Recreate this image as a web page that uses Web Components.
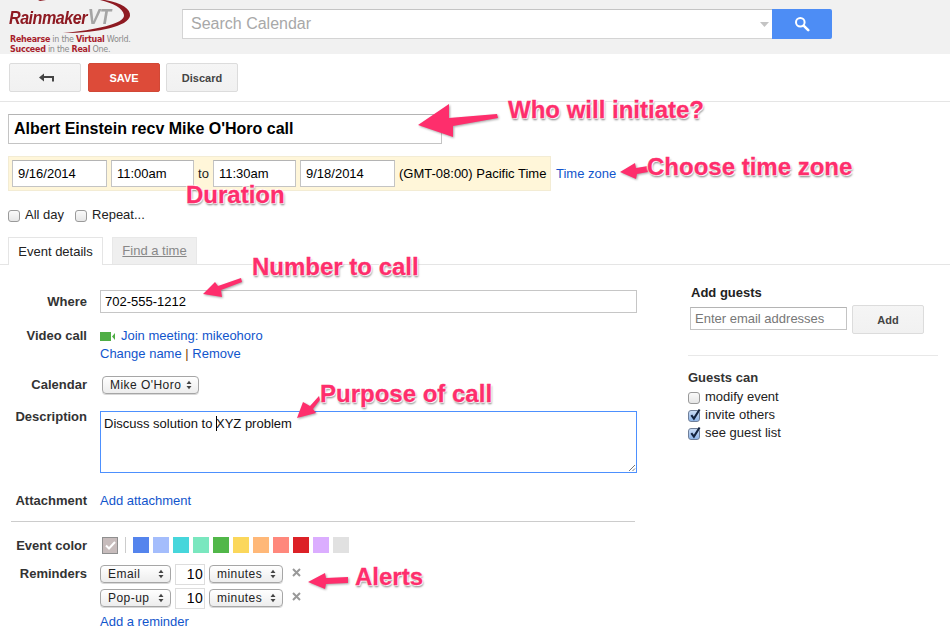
<!DOCTYPE html>
<html lang="en"><head><meta charset="utf-8"><title>Calendar event</title>
<style>
html,body{margin:0;padding:0;background:#fff}
body{width:950px;height:638px;overflow:hidden;position:relative;font:13px/16px "Liberation Sans",Arial,sans-serif;color:#000}
</style></head><body>
<rk-header></rk-header>
<rk-toolbar></rk-toolbar>
<rk-event-head></rk-event-head>
<rk-tabs></rk-tabs>
<rk-body></rk-body>
<rk-annotations></rk-annotations>
<script>
function def(name,css,html,init){
  customElements.define(name,class extends HTMLElement{
    constructor(){super();const s=this.attachShadow({mode:'open'});
      s.innerHTML='<style>'+css+'</style>'+(typeof html==='function'?html(this):html);}
    connectedCallback(){
      if(typeof html==='function'){this.shadowRoot.innerHTML='<style>'+css+'</style>'+html(this);}
      if(init)init(this);}
  });
}
const a=(e,n,d='')=>e.getAttribute(n)??d;

def('rk-btn',`
:host{display:inline-flex;box-sizing:border-box;align-items:center;justify-content:center;height:29px;width:72px;border:1px solid #dcdcdc;border-radius:2px;background:linear-gradient(#f5f5f5,#f1f1f1);color:#444;font:bold 11px/16px "Liberation Sans",Arial,sans-serif}
:host([kind=save]){background:#dd4b39;border-color:#d14836;color:#fff}
`,`<slot></slot>`);

def('rk-check',`
:host{display:inline-flex;align-items:center;gap:5px;font:13px/16px "Liberation Sans",Arial,sans-serif;color:#222}
.b{box-sizing:border-box;width:12px;height:12px;margin-top:2px;border:1px solid #9a9a9a;border-radius:3px;background:linear-gradient(#fafafa,#e6e6e6);position:relative;flex:none}
:host([on]) .b{background:linear-gradient(#c9dcf6,#8fb5e8);border-color:#6f7f9a}
svg{position:absolute;left:0;top:-3px;overflow:visible}
`,e=>`<span class="b">${e.hasAttribute('on')?'<svg width="13" height="13" viewBox="0 0 13 13"><path d="M2.3 7.2l2.6 3.4L10.6 1.5" fill="none" stroke="#13233f" stroke-width="2.1"/></svg>':''}</span><slot></slot>`);

def('rk-select',`
:host{display:inline-flex;box-sizing:border-box;align-items:center;justify-content:space-between;height:18px;padding:0 6px 0 7px;border:1px solid #a6a6a6;border-radius:4px;background:linear-gradient(#fff,#ededed);box-shadow:0 1px 0 #d8d8d8;font:12px/16px "Liberation Sans",Arial,sans-serif;letter-spacing:.45px;color:#222}
svg{flex:none}
`,`<slot></slot><svg width="6" height="10" viewBox="0 0 6 10"><path d="M0.5 4L3 .8 5.5 4zM0.5 6L3 9.2 5.5 6z" fill="#444"/></svg>`);

def('rk-input',`
:host{display:block;box-sizing:border-box;border:1px solid #c4c4c4;border-top-color:#b4b4b4;background:#fff;font:13px/16px "Liberation Sans",Arial,sans-serif;color:#000;padding:0 4px;white-space:nowrap;overflow:hidden;display:flex;align-items:center}
`,`<slot></slot>`);

def('rk-logo',`
:host{display:block;width:136px;height:54px;position:relative;overflow:hidden;flex:none}
svg{position:absolute;left:0;top:0}
.n{position:absolute;left:9px;top:5px;font:italic bold 19px/24px "Liberation Sans",Arial,sans-serif;letter-spacing:-.6px;color:#8e1a22;white-space:nowrap;transform:scaleX(.85);transform-origin:0 0}
.n i{color:#a5a5a5;font-size:22px;margin-left:1px}
.t{position:absolute;left:10px;top:35px;font:8px/10px "DejaVu Sans",sans-serif;color:#8a8a8a;white-space:nowrap;letter-spacing:-.27px}
.t b{color:#a81e2c}
`,`<svg width="136" height="54" viewBox="0 0 136 54"><path d="M105 0C122 3 131 9 130 16 128 26 100 33 63 33 95 30 125 24 124 15 123 8 113 3 100 0ZM38 0H46L40 1Z" fill="#8e1a22"/></svg>
<div class="n">Rainmaker<i>VT</i></div><div class="t"><b>Rehearse</b> in the <b>Virtual</b> World.<br><b>Succeed</b> in the <b>Real</b> One.</div>`);

def('rk-header',`
:host{display:flex;height:54px;background:#f1f1f1;box-sizing:border-box}
.s{margin:9px 0 0 46px;display:flex;height:30px}
.f{box-sizing:border-box;width:590px;height:30px;background:#fff;border:1px solid #d4d4d4;border-top-color:#c4c4c4;border-right:0;color:#a8a8a8;font:16px/28px "Liberation Sans",Arial,sans-serif;padding-left:8px;display:flex;justify-content:space-between;align-items:center}
.f svg{margin-right:3px}
.g{width:60px;height:30px;background:#4d8df5;border-radius:0 2px 2px 0;display:flex;align-items:center;justify-content:center}
`,`<rk-logo></rk-logo><div class="s"><div class="f">Search Calendar<svg width="9" height="5" viewBox="0 0 9 5"><path d="M0 0h9L4.5 5z" fill="#c4c4c4"/></svg></div><div class="g"><svg width="16" height="16" viewBox="0 0 16 16"><circle cx="6.3" cy="6.3" r="4.3" fill="none" stroke="#fff" stroke-width="2"/><path d="M9.6 9.6l4.6 4.6" stroke="#fff" stroke-width="2.6" stroke-linecap="round"/></svg></div></div>`);

def('rk-toolbar',`
:host{display:flex;box-sizing:border-box;height:48px;padding:9px 0 0 9px;gap:6px;border-bottom:1px solid #e5e5e5}
rk-btn:first-of-type{margin-right:1px}
rk-btn svg{margin-left:2px}
`,`<rk-btn><svg width="15" height="9" viewBox="0 0 15 9"><path d="M0 4.5L5 .5V3H15V8.5H13V5H5V8.5Z" fill="#444"/></svg></rk-btn><rk-btn kind="save">SAVE</rk-btn><rk-btn>Discard</rk-btn>`);

def('rk-event-head',`
:host{display:block;padding:12px 0 0 8px}
.title{width:434px;height:30px;padding:0 5px;font:bold 16px/20px "Liberation Sans",Arial,sans-serif}
.bar{display:inline-flex;box-sizing:border-box;margin-top:12px;height:35px;width:543px;background:#fff6d9;border:1px solid #f3ecd4;align-items:center;padding-left:3px;gap:4px;white-space:nowrap}
.bar rk-input{height:27px;padding-left:5px;font-size:13px}
.to{color:#222;width:11px;text-align:center}
.line{display:flex;align-items:center}
.tz{color:#1155cc;margin-left:5px}
.opts{display:flex;gap:11px;margin-top:16px}
`,`<rk-input class="title">Albert Einstein recv Mike O'Horo call</rk-input>
<div class="line"><div class="bar"><rk-input style="width:95px">9/16/2014</rk-input><rk-input style="width:83px">11:00am</rk-input><span class="to">to</span><rk-input style="width:83px">11:30am</rk-input><rk-input style="width:95px">9/18/2014</rk-input><span>(GMT-08:00) Pacific Time</span></div><span class="tz" style="margin-top:12px">Time zone</span></div>
<div class="opts"><rk-check>All day</rk-check><rk-check>Repeat...</rk-check></div>`);

def('rk-tabs',`
:host{display:flex;box-sizing:border-box;height:28px;margin-top:14px;padding-left:8px;gap:9px;border-bottom:1px solid #e5e5e5;font:13px/16px "Liberation Sans",Arial,sans-serif}
span{box-sizing:border-box;height:28px;display:flex;align-items:center;justify-content:center}
.a{width:95px;background:#fff;border:1px solid #e5e5e5;border-bottom:0;color:#222}
.b{width:85px;height:27px;background:#efefef;color:#888;text-decoration:underline;border:1px solid #e8e8e8;border-bottom:0}
`,`<span class="a">Event details</span><span class="b">Find a time</span>`);

def('rk-row',`
:host{display:grid;grid-template-columns:87px 1fr;column-gap:13px;align-items:start}
.l{font:bold 13px/16px "Liberation Sans",Arial,sans-serif;color:#333;text-align:right;white-space:nowrap}
`,e=>`<div class="l" style="padding-top:${a(e,'lt','0')}px;margin-top:${a(e,'lm','0')}px">${a(e,'label')}</div><div><slot></slot></div>`);

def('rk-body',`
:host{display:flex;font:13px/16px "Liberation Sans",Arial,sans-serif}
.m{width:637px;padding-top:25px;flex:none}
.m rk-row{display:grid}
.lk{color:#1155cc;text-decoration:none}
.where{height:23px;width:537px;padding:0 4px;border-color:#c6c6c6}
.vc{display:flex;align-items:center;gap:6px;height:18px}
.cn{height:18px;line-height:18px;color:#7a3b00}
.desc{position:relative;box-sizing:border-box;width:537px;height:62px;border:1px solid #4d90fe;padding:4px 3px;color:#111}
.desc svg{position:absolute;right:0;bottom:0}
.caret{display:inline-block;width:1px;height:15px;background:#000;vertical-align:-3px;margin-right:-1px}
hr{border:0;height:1px;background:#ccc;margin:12px 2px 0 11px}
.colors{display:flex;align-items:center;height:18px;padding-left:2px}
.ck{box-sizing:border-box;width:16px;height:17px;background:#c7bcbc;border:1px solid #8f8f8f;display:flex;align-items:center;justify-content:center;margin-right:7px}
.sep{width:1px;height:16px;background:#ccc;margin-right:7px}
.colors i{width:16px;height:16px;margin-right:4px;display:block}
.rem{display:flex;align-items:center;height:24px;gap:4px}
.rem rk-input{width:30px;height:21px;justify-content:flex-end;padding:0 1px;font-size:14px;letter-spacing:.3px;border-color:#ddd}
.x{margin-left:5px;margin-top:-3px}
.s{width:250px;margin-left:51px;padding-top:20px;flex:none}
.ag{font:bold 13px/16px "Liberation Sans",Arial,sans-serif;color:#222;padding-left:3px}
.gi{display:flex;margin-top:4px;padding-left:2px;gap:5px;align-items:flex-start}
.gi rk-input{width:157px;height:23px;margin-top:2px;color:#777;padding:0 4px}
.s hr{margin:21px 0 0;background:#e8e8e8}
.gc{font:bold 13px/17px "Liberation Sans",Arial,sans-serif;color:#333;margin:13px 0 2px}
.s rk-check{display:flex;height:18px}
`,`<div class="m">
<rk-row label="Where" lt="4"><rk-input class="where">702-555-1212</rk-input></rk-row>
<rk-row label="Video call" lt="1" style="margin-top:14px"><div class="vc"><svg width="15" height="9" viewBox="0 0 15 9"><rect width="11" height="9" fill="#4fae45"/><path d="M12 4.5L15 1v7z" fill="#4fae45"/></svg><span class="lk">Join meeting: mikeohoro</span></div><div class="cn"><span class="lk">Change name</span> | <span class="lk">Remove</span></div></rk-row>
<rk-row label="Calendar" lt="1" style="margin-top:13px"><rk-select style="width:97px;margin-left:2px">Mike O'Horo</rk-select></rk-row>
<rk-row label="Description" style="margin-top:17px" lm="-2"><div class="desc">Discuss solution to <span class="caret"></span>XYZ problem<svg width="8" height="8" viewBox="0 0 8 8"><path d="M1 7l6-6M4.5 7l2.5-2.5" stroke="#777" fill="none"/></svg></div></rk-row>
<rk-row label="Attachment" style="margin-top:20px"><span class="lk">Add attachment</span></rk-row>
<hr>
<rk-row label="Event color" style="margin-top:14px" lt="2"><div class="colors"><div class="ck"><svg width="11" height="9" viewBox="0 0 11 9"><path d="M1 4.5l3 3L10 1" fill="none" stroke="#fff" stroke-width="2"/></svg></div><div class="sep"></div><i style="background:#5484ed"></i><i style="background:#a4bdfc"></i><i style="background:#46d6db"></i><i style="background:#7ae7bf"></i><i style="background:#51b749"></i><i style="background:#fbd75b"></i><i style="background:#ffb878"></i><i style="background:#ff887c"></i><i style="background:#dc2127"></i><i style="background:#dbadff"></i><i style="background:#e1e1e1"></i></div></rk-row>
<rk-row label="Reminders" style="margin-top:8px" lt="4"><div class="rem"><rk-select style="width:71px">Email</rk-select><rk-input>10</rk-input><rk-select style="width:74px">minutes</rk-select><svg class="x" width="9" height="9" viewBox="0 0 9 9"><path d="M1 1l7 7M8 1L1 8" stroke="#999" stroke-width="2"/></svg></div><div class="rem"><rk-select style="width:71px">Pop-up</rk-select><rk-input>10</rk-input><rk-select style="width:74px">minutes</rk-select><svg class="x" width="9" height="9" viewBox="0 0 9 9"><path d="M1 1l7 7M8 1L1 8" stroke="#999" stroke-width="2"/></svg></div><div style="margin-top:4px"><span class="lk">Add a reminder</span></div></rk-row>
</div>
<div class="s">
<div class="ag">Add guests</div>
<div class="gi"><rk-input>Enter email addresses</rk-input><rk-btn>Add</rk-btn></div>
<hr>
<div class="gc">Guests can</div>
<rk-check>modify event</rk-check><rk-check on>invite others</rk-check><rk-check on>see guest list</rk-check>
</div>`);

def('rk-note',`
:host{position:absolute;white-space:nowrap;font:bold 24px/28px "Liberation Sans",Arial,sans-serif;color:#fe2e6c;-webkit-text-stroke:.3px #fe2e6c;text-shadow:0 0 2px #fff,0 0 2px #fff,1px 1px 1px #fff,-1px -1px 1px #fff,1px 2px 2px rgba(0,0,0,.55)}
`,`<slot></slot>`,e=>{e.style.left=a(e,'x')+'px';e.style.top=a(e,'y')+'px';});

def('rk-annotations',`
:host{position:absolute;left:0;top:0;width:950px;height:638px;pointer-events:none}
svg{position:absolute;left:0;top:0;filter:drop-shadow(1px 1px 1px rgba(0,0,0,.35))}
`,`<svg width="950" height="638" viewBox="0 0 950 638" fill="#fe2e6c">
<polygon points="418,125 449,104 449,118 497,114 498,118 453,126 453,137"/>
<polygon points="620,172 635,163 636,168 648,166 648,172 637,174 636,179"/>
<polygon points="203,294 215,282 218,286 241,278 242,282 221,290 222,297"/>
<polygon points="297,418 303,402 310,406 319,396 320,400 313,409 316,413"/>
<polygon points="308,582 325,573 326,578 348,577 348,583 326,584 325,589"/>
</svg>
<rk-note x="508" y="96">Who will initiate?</rk-note>
<rk-note x="647" y="153">Choose time zone</rk-note>
<rk-note x="186" y="181">Duration</rk-note>
<rk-note x="252" y="253">Number to call</rk-note>
<rk-note x="320" y="380">Purpose of call</rk-note>
<rk-note x="355" y="563">Alerts</rk-note>`);
</script>
</body></html>
